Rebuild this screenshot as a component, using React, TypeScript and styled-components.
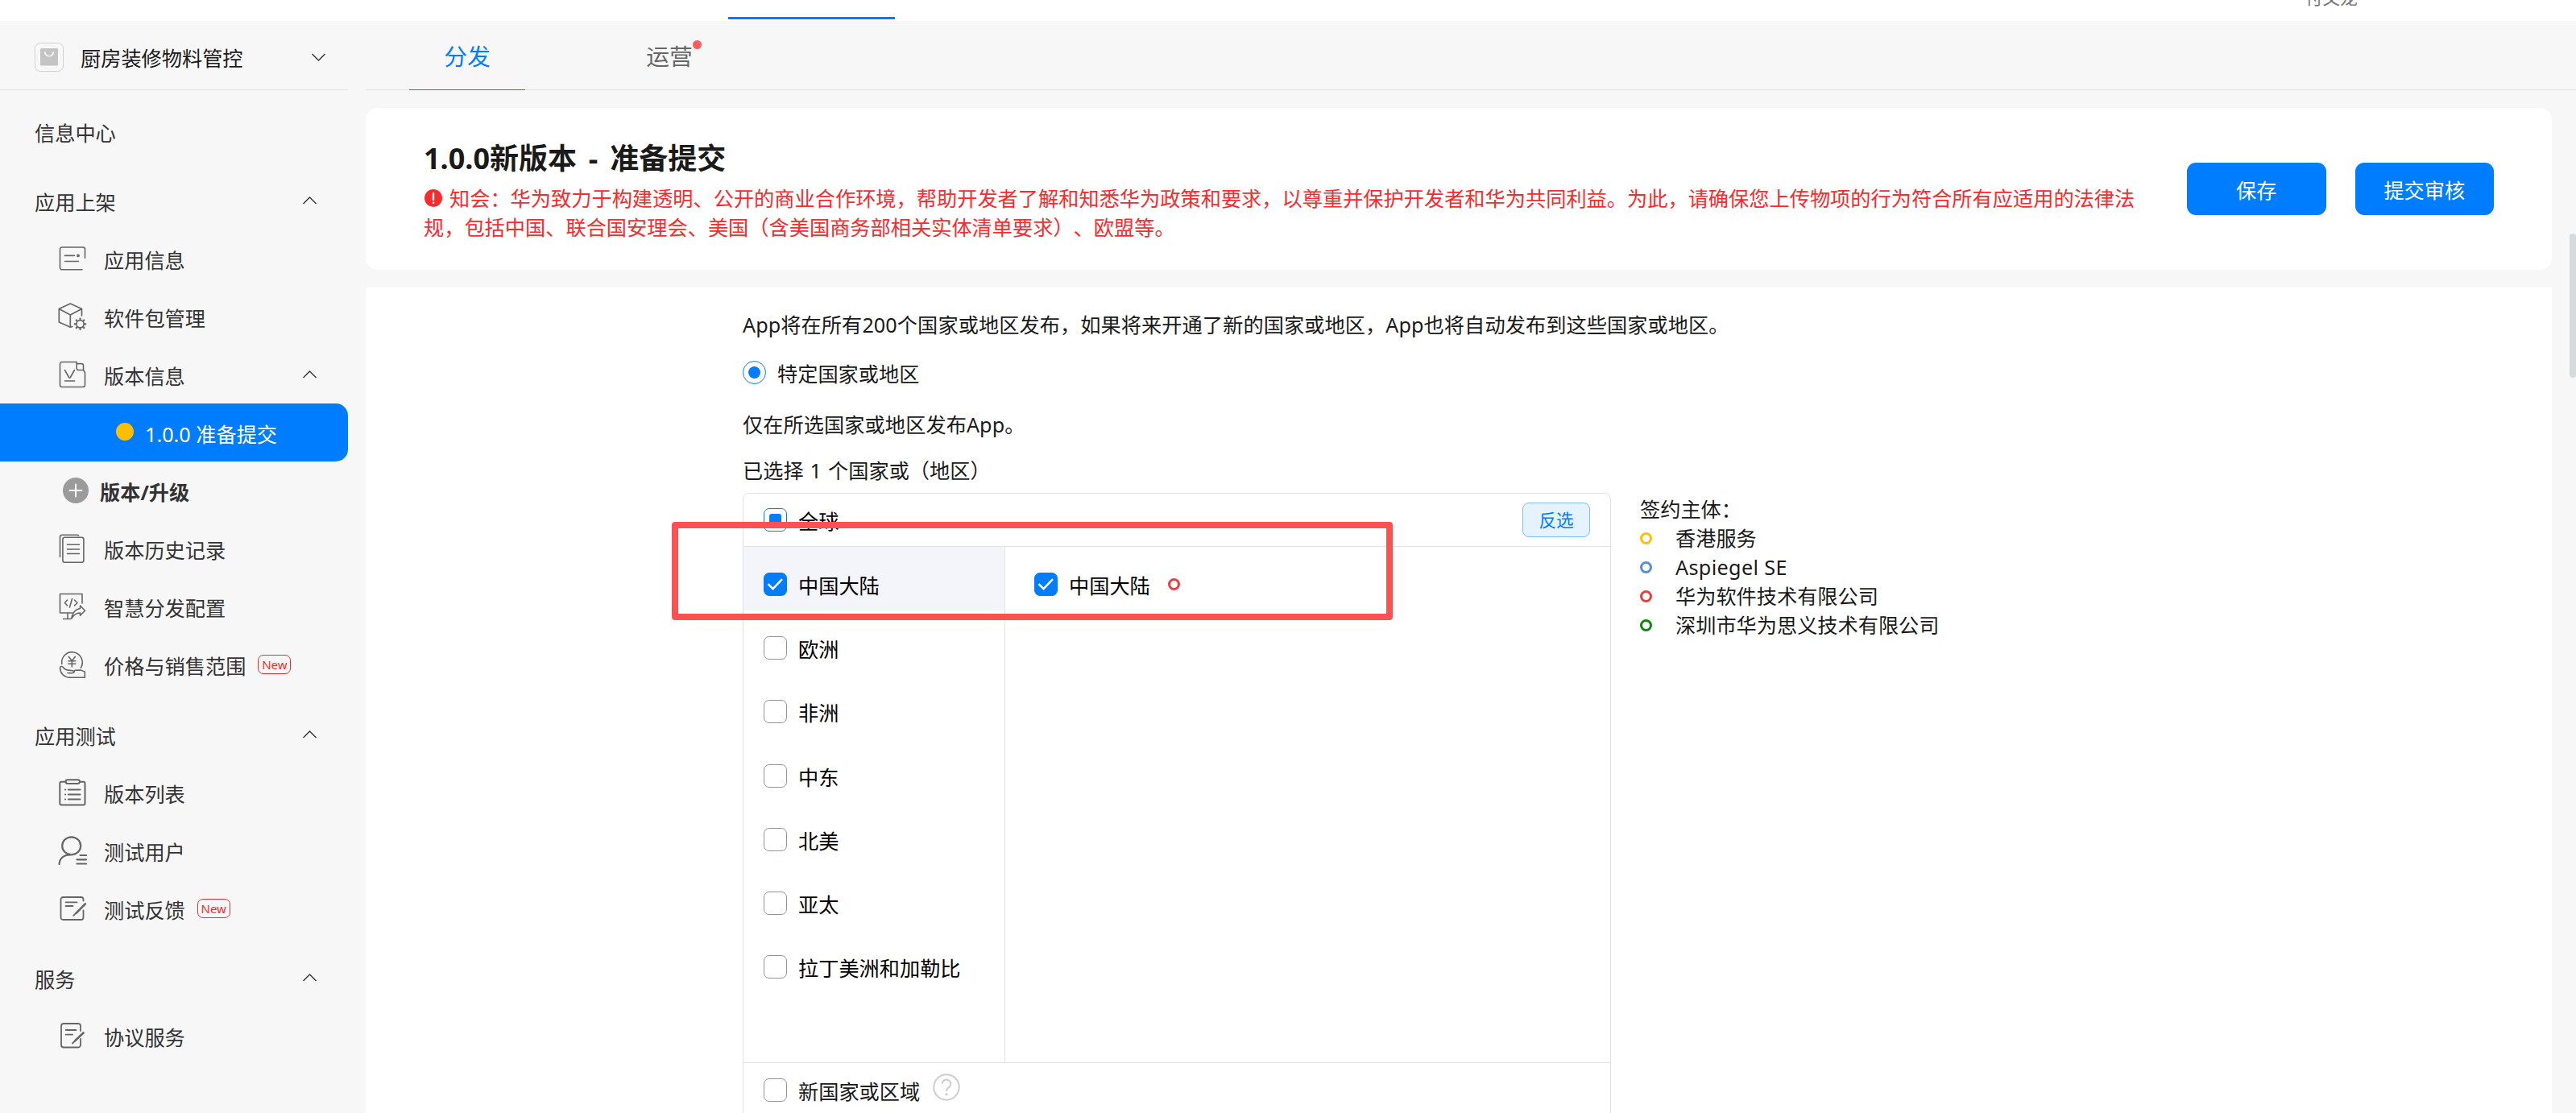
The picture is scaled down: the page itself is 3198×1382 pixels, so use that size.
import React from 'react';
import styled, { createGlobalStyle, css } from 'styled-components';

const GlobalStyle = createGlobalStyle`
  * { box-sizing: border-box; }
  html, body { margin: 0; padding: 0; overflow: hidden; }
  body {
    background: #fff;
    font-family: 'Noto Sans', 'Noto Sans CJK SC', sans-serif;
    font-size: 25.2px;
    line-height: 36px;
    color: #1a1a1a;
    text-spacing-trim: space-all;
  }
`;

const Page = styled.div`
  width: 3198px;
  height: 1382px;
  display: flex;
  flex-direction: column;
  overflow: hidden;
  position: relative;
`;

const TopBar = styled.header`
  height: 26px;
  flex: none;
  display: flex;
  align-items: flex-start;
  padding-left: 904px;
  background: #fff;
`;

const TopIndicator = styled.div`
  width: 207px;
  height: 3px;
  margin-top: 21px;
  background: #007dff;
`;

const UserName = styled.span`
  margin: -19px 0 0 1751px;
  font-size: 21.6px;
  line-height: 32px;
  color: #777;
`;

const Body = styled.div`
  flex: 1;
  min-height: 0;
  display: flex;
  background: #f7f7f7;
`;

const Sidebar = styled.nav`
  width: 432px;
  flex: none;
  display: flex;
  flex-direction: column;
  color: #333;
`;

const AppPicker = styled.div`
  height: 86px;
  flex: none;
  margin-bottom: 15px;
  padding: 4px 28px 0 43px;
  display: flex;
  align-items: center;
  border-bottom: 1px solid #dfdfdf;
  color: #1a1a1a;
`;

const AppName = styled.span`
  flex: 1;
  padding-left: 21px;
  margin-top: 3px;
`;

const sidebarRow = css`
  height: 72px;
  flex: none;
  display: flex;
  align-items: center;
`;

const GroupRow = styled.div<{ $gap?: number }>`
  ${sidebarRow}
  justify-content: space-between;
  padding: 0 39px 0 43px;
  margin-top: ${(p) => p.$gap ?? 0}px;
`;

const Label = styled.span`
  margin-top: 3px;
`;

const ItemRow = styled.div`
  ${sidebarRow}
  padding: 0 39px 0 72px;
`;

const ItemLabel = styled(Label)`
  margin-left: 21px;
`;

const Spacer = styled.span`
  flex: 1;
`;

const ActiveRow = styled.div`
  ${sidebarRow}
  padding-left: 144px;
  border-radius: 0 15px 15px 0;
  background: #007dff;
  color: #fff;
`;

const StatusDot = styled.span`
  width: 22px;
  height: 22px;
  margin: -2px 14px 0 0;
  border-radius: 50%;
  background: #ffbf00;
`;

const UpgradeRow = styled.div`
  ${sidebarRow}
  padding-left: 78px;
  gap: 14px;
  font-weight: 700;
`;

const NewBadge = styled.span`
  width: 41px;
  height: 24px;
  margin-left: 15px;
  border: 1px solid #fa2a2d;
  border-radius: 7px;
  display: flex;
  align-items: center;
  justify-content: center;
  font-size: 15px;
  line-height: 20px;
  color: #fa2a2d;
`;

const Main = styled.main`
  flex: 1;
  min-width: 0;
  padding-left: 22px;
  display: flex;
  flex-direction: column;
`;

const Tabs = styled.div`
  height: 86px;
  flex: none;
  padding-left: 54px;
  display: flex;
  gap: 107px;
  border-bottom: 1px solid #dfdfdf;
`;

const Tab = styled.div<{ $active?: boolean }>`
  width: 144px;
  height: 86px;
  padding-top: 2px;
  display: flex;
  align-items: center;
  justify-content: center;
  font-size: 28.8px;
  color: ${(p) => (p.$active ? '#007dff' : '#666')};
  border-bottom: 1px solid ${(p) => (p.$active ? '#007dff' : '#dfdfdf')};
`;

const TabText = styled.span`
  position: relative;
`;

const TabDot = styled.span`
  position: absolute;
  right: -11px;
  top: -2px;
  width: 11px;
  height: 11px;
  border-radius: 50%;
  background: #ff5c5f;
`;

const HeadCard = styled.section`
  width: 2714px;
  height: 201px;
  flex: none;
  margin-top: 22px;
  padding: 0 72px;
  display: flex;
  justify-content: space-between;
  background: #fff;
  border-radius: 15px;
`;

const HeadText = styled.div`
  padding-top: 38px;
`;

const Title = styled.h1`
  margin: 0;
  font-size: 36px;
  line-height: 50px;
  font-weight: 700;
  word-spacing: 5.5px;
`;

const Notice = styled.p`
  margin: 6px 0 0;
  color: #fa2a2d;
  white-space: nowrap;
  letter-spacing: 0.02px;

  svg {
    display: inline-block;
    vertical-align: -1px;
    margin: 0 9px 0 1px;
  }
`;

const Actions = styled.div`
  display: flex;
  gap: 36px;
  padding-top: 68px;
`;

const PrimaryButton = styled.button`
  width: 172.5px;
  height: 65px;
  padding: 2px 0 0;
  border: 0;
  border-radius: 11px;
  background: #007dff;
  color: #fff;
  font: inherit;
`;

const ContentCard = styled.section`
  width: 2714px;
  flex: 1;
  min-height: 0;
  overflow: hidden;
  margin-top: 22px;
  padding: 28px 0 0 468px;
  background: #fff;
`;

const Line = styled.p<{ $top?: number; $track?: number; $word?: number }>`
  margin: ${(p) => p.$top ?? 0}px 0 0;
  letter-spacing: ${(p) => p.$track ?? 0}px;
  word-spacing: ${(p) => p.$word ?? 0}px;
  white-space: nowrap;
`;

const RadioRow = styled.label`
  margin-top: 25px;
  display: flex;
  align-items: center;
  gap: 14px;
`;

const Radio = styled.span`
  width: 29px;
  height: 29px;
  margin-top: -3px;
  border: 1px solid #007dff;
  border-radius: 50%;
  display: grid;
  place-items: center;

  &::after {
    content: '';
    width: 15px;
    height: 15px;
    border-radius: 50%;
    background: #007dff;
  }
`;

const RegionArea = styled.div`
  margin-top: 10px;
  display: flex;
  align-items: flex-start;
  gap: 36px;
`;

const RegionTable = styled.div`
  width: 1078px;
  height: 820px;
  border: 1px solid #dfe3e9;
  border-radius: 8px;
  color: #000;
`;

const TableHead = styled.div`
  height: 66px;
  padding: 0 25px;
  display: flex;
  align-items: center;
  justify-content: space-between;
  border-bottom: 1px solid #dfe3e9;
`;

const CheckLabel = styled.label`
  display: flex;
  align-items: center;
  gap: 14px;
  color: inherit;
`;

const InvertButton = styled.button`
  width: 84px;
  height: 43px;
  padding: 0;
  border: 1px solid #80beff;
  border-radius: 8px;
  background: #e5f2ff;
  color: #007dff;
  font: inherit;
  font-size: 21.6px;
`;

const TableBody = styled.div`
  height: 641px;
  display: flex;
  border-bottom: 1px solid #dfe3e9;
`;

const Continents = styled.div`
  width: 325px;
  border-right: 1px solid #dfe3e9;
`;

const Continent = styled.div<{ $selected?: boolean }>`
  height: 79.2px;
  padding: 14px 0 0 25px;
  display: flex;
  align-items: center;
  background: ${(p) => (p.$selected ? '#f3f5fa' : 'transparent')};
`;

const Countries = styled.div`
  height: 79.2px;
  padding: 13px 0 0 36px;
  display: flex;
  align-items: center;
  gap: 22px;
`;

const Box = styled.span<{ $state: 'on' | 'off' | 'mixed' }>`
  width: 29px;
  height: 29px;
  flex: none;
  display: grid;
  place-items: center;
  border: 1px solid ${(p) => (p.$state === 'off' ? '#8f949e' : '#007dff')};
  border-radius: 7px;
  background: ${(p) => (p.$state === 'on' ? '#007dff' : '#fff')};
`;

const MixedMark = styled.span`
  width: 15px;
  height: 15px;
  border-radius: 3px;
  background: #007dff;
`;

const Ring = styled.span<{ $color: string }>`
  width: 15px;
  height: 15px;
  flex: none;
  border: 3.6px solid ${(p) => p.$color};
  border-radius: 50%;
`;

const TableFoot = styled.div`
  height: 66px;
  padding: 0 25px;
  display: flex;
  align-items: center;
  gap: 16px;
  color: #1a1a1a;
`;

const HelpIcon = styled.svg`
  margin-top: -6px;
`;

const Legend = styled.div`
  padding-top: 2px;
  display: flex;
  flex-direction: column;
  color: #1a1a1a;
`;

const LegendRow = styled.div<{ $track?: number }>`
  height: 36px;
  display: flex;
  align-items: center;
  gap: 29px;
  letter-spacing: ${(p) => p.$track ?? 0}px;
`;

const ScrollThumb = styled.div`
  position: absolute;
  right: 0;
  top: 290px;
  width: 8px;
  height: 179px;
  border-radius: 4px;
  background: #d8d9db;
`;

const Highlight = styled.div`
  position: absolute;
  left: 834px;
  top: 648px;
  width: 895px;
  height: 122px;
  border: 8px solid #fc5151;
  border-radius: 4px;
`;

const Chevron = ({ up }: { up?: boolean }) => (
  <svg width="17" height="10" viewBox="0 0 17 10" fill="none" stroke="#333" strokeWidth="1.4">
    <path d={up ? 'M.5 9 8.5 1l8 8' : 'M.5 1l8 8 8-8'} />
  </svg>
);

const Glyph = ({ children, weight = 1.6 }: { children: React.ReactNode; weight?: number }) => (
  <svg
    width="36"
    height="36"
    viewBox="0 0 36 36"
    fill="none"
    stroke="#666"
    strokeWidth={weight}
    strokeLinecap="round"
    strokeLinejoin="round"
  >
    {children}
  </svg>
);

const InfoGlyph = () => (
  <Glyph>
    <path d="M30 31.8H5a2.5 2.5 0 0 1-2.5-2.5V6.5A2.5 2.5 0 0 1 5 4h26a2.5 2.5 0 0 1 2.5 2.5V17.5" />
    <path d="M8.5 14.4h11.8M8.5 21.5H25.5" />
    <circle cx="25" cy="14.4" r="1.1" fill="#666" />
  </Glyph>
);

const teeth = Array.from({ length: 8 }, (_, i) => {
  const a = (i * Math.PI) / 4;
  const at = (r: number) => `${(27.5 + r * Math.cos(a)).toFixed(2)} ${(27.3 + r * Math.sin(a)).toFixed(2)}`;
  return `M${at(5.4)}L${at(6.8)}`;
}).join('');

const PackageGlyph = () => (
  <Glyph weight={1.7}>
    <path d="M29.5 17V8.5L15.3 2 1.3 8.5V25l14 6.3 2.5-.8M1.3 8.5l14 7.5 14.2-7.5M15.3 16v15" />
    <circle cx="27.5" cy="27.3" r="4.6" />
    <path d={teeth} strokeWidth="2.2" />
  </Glyph>
);

const VersionGlyph = () => (
  <Glyph>
    <path d="M23.2 2.5H5A2.5 2.5 0 0 0 2.5 5v26A2.5 2.5 0 0 0 5 33.5h26a2.5 2.5 0 0 0 2.5-2.5V15.5l-2-3" />
    <path d="M23.2 2.5V10.3a2.2 2.2 0 0 0 2.2 2.2H31.5V6.8a2.2 2.2 0 0 0-2.2-2.2h-5" />
    <path d="M8.5 12.5l5 9c.6.9 1.3.9 1.9 0l5-9M8.5 26H20.5" />
  </Glyph>
);

const HistoryGlyph = () => (
  <Glyph>
    <rect x="5.9" y="4.2" width="26" height="31" rx="2.5" />
    <path d="M2.5 28.5V4A2.8 2.8 0 0 1 5.3 1.2H23.5q1.5 0 2 .8M11.5 13.3h15M11.5 19h15M11.5 24.5h15" />
  </Glyph>
);

const DispatchGlyph = () => (
  <Glyph>
    <path d="M30 14V2.5H2.5V26H18M12 26v7.5M6.5 33.5H16" />
    <path d="M11.5 10 8.5 13.5l3 3.5M20.5 10l3.5 3.5-3.5 3.5M17.500 8.500l-3 10.500" />
    <path d="M16.8 33C18 26 21.5 21.5 27.5 20.5V17l6 6.3-6 6V26C22.5 26 19.5 28.5 16.8 33z" />
  </Glyph>
);

const PriceGlyph = () => (
  <Glyph>
    <path d="M4.8 17.5A12.8 12.8 0 1 1 28.3 22.3" />
    <path d="M13.2 8.3l4.1 5.2 4.1-5.2M17.3 13.5V21M12.8 13.7h9M12.8 17.3h9" />
    <path d="M18 25.8c2-.2 2.2 2.7.2 3H12M20 27.5l1-2.3 6.5-.2c2.500 0 3 1.700 5.800 2V34.200H14.500C8 34.200 3 29.500 2.600 23c-.1-3 2.700-3.200 4.400-.8 2 2.800 4.500 3 8 3.200l3 .4" />
  </Glyph>
);

const ListGlyph = () => (
  <Glyph weight={2}>
    <path d="M9.5 4.7H4.3a2 2 0 0 0-2 2V31.6a2 2 0 0 0 2 2H31.5a2 2 0 0 0 2-2V6.7a2 2 0 0 0-2-2H27" />
    <rect x="9.5" y="2.2" width="17.5" height="4.8" rx="2.4" />
    <path d="M12.8 14.5H27.5M12.8 20.5H27.5M12.8 26.5H27.5M9 14.5h.1M9 20.5h.1M9 26.5h.1" />
  </Glyph>
);

const UserGlyph = () => (
  <Glyph weight={2.2}>
    <ellipse cx="16.7" cy="12.3" rx="11.5" ry="11" />
    <path d="M1.5 35C2 28.5 6.5 23.500 15 23.300M27.500 24H35M23.500 29.300H35M23.500 34.500H35" />
  </Glyph>
);

const FeedbackGlyph = () => (
  <Glyph weight={1.8}>
    <path d="M31.5 8.5V6.8A2.8 2.8 0 0 0 28.7 4H6.3A2.8 2.8 0 0 0 3.5 6.8V29.2A2.8 2.8 0 0 0 6.3 32H28.700a2.800 2.800 0 0 0 2.800-2.800V20.500" />
    <path d="M9.5 10.3H23.5M9.5 15H18.5" />
    <path d="M33.8 12.3 22.5 23.8" strokeWidth="2.6" />
    <path d="M22 24.2l-2.8 2.6" />
  </Glyph>
);

const AgreementGlyph = () => (
  <Glyph weight={1.8}>
    <path d="M28 12V6A3 3 0 0 0 25 3H7A3 3 0 0 0 4 6V29.5A3 3 0 0 0 7 32.5H25a3 3 0 0 0 3-3V22" />
    <path d="M9.7 11H22.5M9.7 16.7H18" />
    <path d="M31.5 14.5 21.5 24" strokeWidth="2.6" />
    <path d="M21 24.5 18 27.5" />
  </Glyph>
);

const PlusGlyph = () => (
  <svg width="32" height="32" viewBox="0 0 32 32">
    <circle cx="16" cy="16" r="16" fill="#9b9b9b" />
    <path d="M8.5 16h15M16 8.5v15" stroke="#fff" strokeWidth="2" strokeLinecap="round" />
  </svg>
);

const AppGlyph = () => (
  <svg width="36" height="36" viewBox="0 0 36 36" fill="none">
    <rect x=".5" y=".5" width="35" height="35" rx="7" fill="#fafafa" stroke="#cfcfcf" />
    <circle cx="18" cy="18" r="15" stroke="#efefef" />
    <rect x="7" y="7" width="22" height="21.5" rx="1.5" fill="#c4c4c4" />
    <path d="M12.7 11.5a5.3 5.3 0 0 0 10.6 0" stroke="#fff" strokeWidth="1.6" />
  </svg>
);

const AlertGlyph = () => (
  <svg width="22" height="22" viewBox="0 0 22 22">
    <circle cx="11" cy="11" r="11" fill="#fa2a2d" />
    <path d="M11 5v8" stroke="#fff" strokeWidth="2.4" strokeLinecap="round" />
    <circle cx="11" cy="16.7" r="1.3" fill="#fff" />
  </svg>
);

type CheckState = 'on' | 'off' | 'mixed';

const Check = ({ state, children }: { state: CheckState; children: React.ReactNode }) => (
  <CheckLabel>
    <Box $state={state}>
      {state === 'on' && (
        <svg width="21" height="17" viewBox="0 0 21 17" fill="none" stroke="#fff" strokeWidth="2.4">
          <path d="M1.5 8.2l6 6L19 2.2" />
        </svg>
      )}
      {state === 'mixed' && <MixedMark />}
    </Box>
    <Label>{children}</Label>
  </CheckLabel>
);

const continents = ['中国大陆', '欧洲', '非洲', '中东', '北美', '亚太', '拉丁美洲和加勒比'];

const entities = [
  { name: '香港服务', color: '#ffbf00' },
  { name: 'Aspiegel SE', color: '#5291d6', track: 0.35 },
  { name: '华为软件技术有限公司', color: '#e84040' },
  { name: '深圳市华为思义技术有限公司', color: '#0a8a0a' },
];

const Item = ({ icon, label, badge, open }: { icon: React.ReactNode; label: string; badge?: boolean; open?: boolean }) => (
  <ItemRow>
    {icon}
    <ItemLabel>{label}</ItemLabel>
    {badge && <NewBadge>New</NewBadge>}
    {open && (
      <>
        <Spacer />
        <Chevron up />
      </>
    )}
  </ItemRow>
);

export default function App() {
  return (
    <>
      <GlobalStyle />
      <Page>
        <TopBar>
          <TopIndicator />
          <UserName>付文龙</UserName>
        </TopBar>
        <Body>
          <Sidebar>
            <AppPicker>
              <AppGlyph />
              <AppName>厨房装修物料管控</AppName>
              <Chevron />
            </AppPicker>
            <GroupRow>
              <Label>信息中心</Label>
            </GroupRow>
            <GroupRow $gap={14}>
              <Label>应用上架</Label>
              <Chevron up />
            </GroupRow>
            <Item icon={<InfoGlyph />} label="应用信息" />
            <Item icon={<PackageGlyph />} label="软件包管理" />
            <Item icon={<VersionGlyph />} label="版本信息" open />
            <ActiveRow>
              <StatusDot />
              <Label>1.0.0 准备提交</Label>
            </ActiveRow>
            <UpgradeRow>
              <PlusGlyph />
              <Label>版本/升级</Label>
            </UpgradeRow>
            <Item icon={<HistoryGlyph />} label="版本历史记录" />
            <Item icon={<DispatchGlyph />} label="智慧分发配置" />
            <Item icon={<PriceGlyph />} label="价格与销售范围" badge />
            <GroupRow $gap={15}>
              <Label>应用测试</Label>
              <Chevron up />
            </GroupRow>
            <Item icon={<ListGlyph />} label="版本列表" />
            <Item icon={<UserGlyph />} label="测试用户" />
            <Item icon={<FeedbackGlyph />} label="测试反馈" badge />
            <GroupRow $gap={14}>
              <Label>服务</Label>
              <Chevron up />
            </GroupRow>
            <Item icon={<AgreementGlyph />} label="协议服务" />
          </Sidebar>
          <Main>
            <Tabs>
              <Tab $active>分发</Tab>
              <Tab>
                <TabText>
                  运营
                  <TabDot />
                </TabText>
              </Tab>
            </Tabs>
            <HeadCard>
              <HeadText>
                <Title>1.0.0新版本 - 准备提交</Title>
                <Notice>
                  <AlertGlyph />
                  知会：华为致力于构建透明、公开的商业合作环境，帮助开发者了解和知悉华为政策和要求，以尊重并保护开发者和华为共同利益。为此，请确保您上传物项的行为符合所有应适用的法律法
                  <br />
                  规，包括中国、联合国安理会、美国（含美国商务部相关实体清单要求）、欧盟等。
                </Notice>
              </HeadText>
              <Actions>
                <PrimaryButton>保存</PrimaryButton>
                <PrimaryButton>提交审核</PrimaryButton>
              </Actions>
            </HeadCard>
            <ContentCard>
              <Line $track={0.08}>
                App将在所有200个国家或地区发布，如果将来开通了新的国家或地区，App也将自动发布到这些国家或地区。
              </Line>
              <RadioRow>
                <Radio />
                特定国家或地区
              </RadioRow>
              <Line $top={27} $track={0.08}>
                仅在所选国家或地区发布App。
              </Line>
              <Line $top={21} $word={1.5}>
                已选择 1 个国家或（地区）
              </Line>
              <RegionArea>
                <RegionTable>
                  <TableHead>
                    <Check state="mixed">全球</Check>
                    <InvertButton>反选</InvertButton>
                  </TableHead>
                  <TableBody>
                    <Continents>
                      {continents.map((name, i) => (
                        <Continent key={name} $selected={i === 0}>
                          <Check state={i === 0 ? 'on' : 'off'}>{name}</Check>
                        </Continent>
                      ))}
                    </Continents>
                    <Countries>
                      <Check state="on">中国大陆</Check>
                      <Ring $color="#e84040" />
                    </Countries>
                  </TableBody>
                  <TableFoot>
                    <Check state="off">新国家或区域</Check>
                    <HelpIcon width="34" height="34" viewBox="0 0 34 34" fill="none" stroke="#ccc" strokeWidth="2">
                      <circle cx="17" cy="17" r="15.7" />
                      <path d="M11.8 12.8a5.2 5.2 0 1 1 8.2 4.2c-2 1.5-3 2.3-3 5" />
                      <circle cx="17" cy="26" r=".8" fill="#ccc" />
                    </HelpIcon>
                  </TableFoot>
                </RegionTable>
                <Legend>
                  <Line>签约主体：</Line>
                  {entities.map((e) => (
                    <LegendRow key={e.name} $track={e.track}>
                      <Ring $color={e.color} />
                      {e.name}
                    </LegendRow>
                  ))}
                </Legend>
              </RegionArea>
            </ContentCard>
          </Main>
        </Body>
        <ScrollThumb />
        <Highlight />
      </Page>
    </>
  );
}
